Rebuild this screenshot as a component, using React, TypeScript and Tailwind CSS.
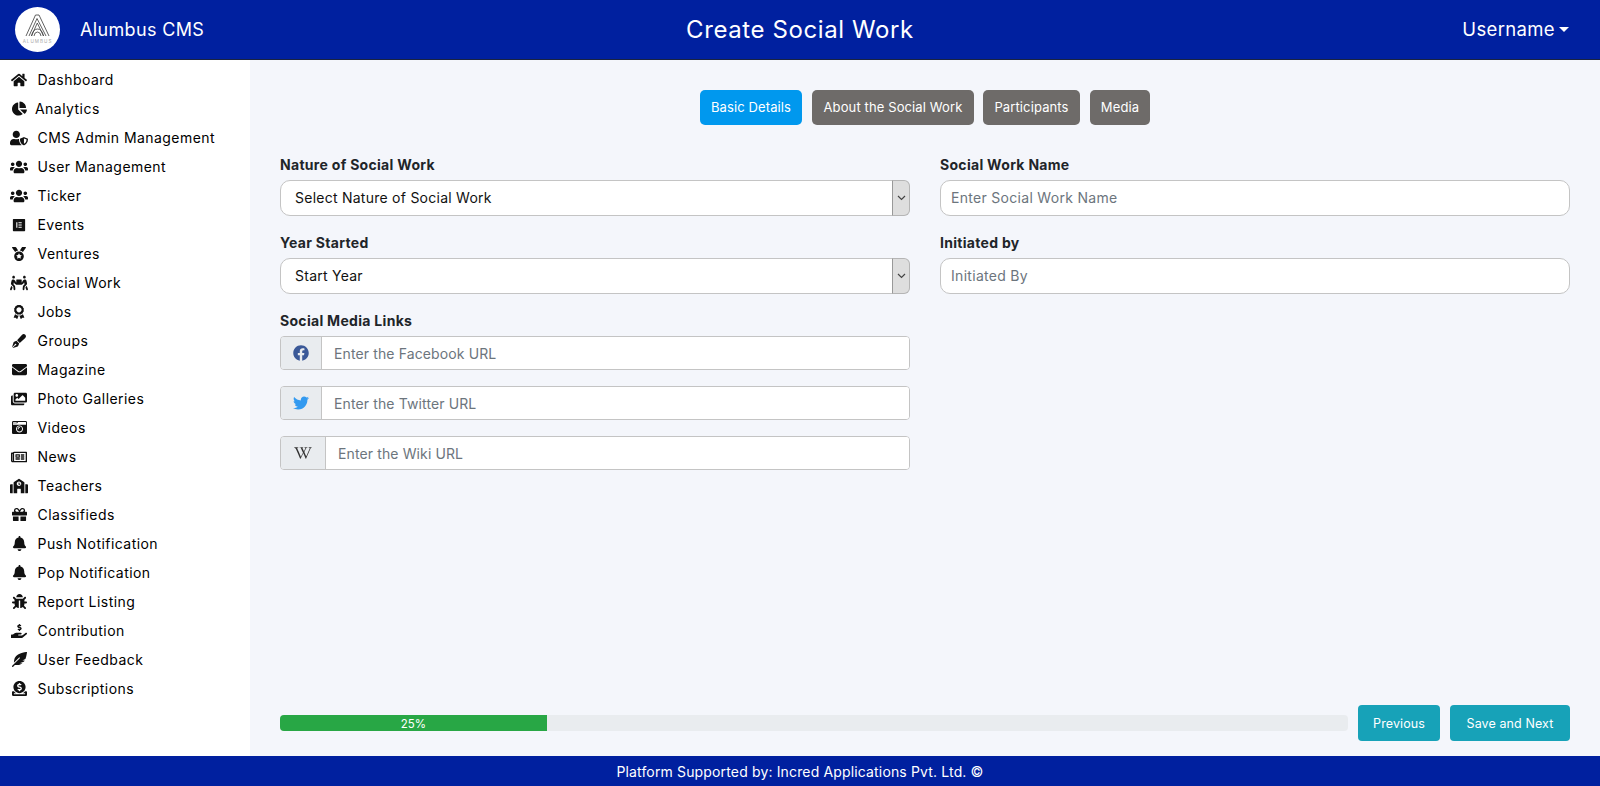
import React from "react";
import {
  FaHome, FaChartPie, FaUserShield, FaUsers, FaElementor, FaMedal, FaPeopleCarry, FaAward, FaPenFancy,
  FaEnvelope, FaImages, FaCameraRetro, FaRegNewspaper, FaSchool, FaGift, FaBell, FaBug, FaHandHoldingUsd,
  FaFeatherAlt, FaDonate, FaFacebook, FaTwitter, FaWikipediaW,
} from "react-icons/fa";

const menu: [any, string, string, boolean?][] = [
  [FaHome, "Dashboard", "text-[16px]"],
  [FaChartPie, "Analytics", "text-[15px]", true],
  [FaUserShield, "CMS Admin Management", "text-[18px]"],
  [FaUsers, "User Management", "text-[18px]"],
  [FaUsers, "Ticker", "text-[18px]"],
  [FaElementor, "Events", "text-[14px]"],
  [FaMedal, "Ventures", "text-[14px]"],
  [FaPeopleCarry, "Social Work", "text-[18px]"],
  [FaAward, "Jobs", "text-[14px]"],
  [FaPenFancy, "Groups", "text-[14px]"],
  [FaEnvelope, "Magazine", "text-[15px]"],
  [FaImages, "Photo Galleries", "text-[16px]"],
  [FaCameraRetro, "Videos", "text-[15px]"],
  [FaRegNewspaper, "News", "text-[16px]"],
  [FaSchool, "Teachers", "text-[18px]"],
  [FaGift, "Classifieds", "text-[15px]"],
  [FaBell, "Push Notification", "text-[15px]"],
  [FaBell, "Pop Notification", "text-[15px]"],
  [FaBug, "Report Listing", "text-[15px]"],
  [FaHandHoldingUsd, "Contribution", "text-[16px]"],
  [FaFeatherAlt, "User Feedback", "text-[15px]"],
  [FaDonate, "Subscriptions", "text-[15px]"],
];

function Logo() {
  return (
    <div className="w-[45px] h-[45px] rounded-full bg-white flex items-center justify-center shrink-0">
      <svg viewBox="0 0 45 45" className="w-[45px] h-[45px]">
        <g fill="none" stroke="#3a3a3a" strokeWidth="0.8">
          <path d="M11 29 L20.5 8 L24 8 L34 29" />
          <path d="M14 29 L22 11.5 L31 29" />
          <path d="M16.5 29 L22.3 16 L28.5 29" />
          <path d="M16.5 29 Q18 22 22.5 22 Q27 22 28.5 29" />
          <path d="M19 29 Q19.5 25 22.5 25 Q25.5 25 26 29" />
        </g>
        <text x="22.5" y="35.5" textAnchor="middle" fontSize="4.6" letterSpacing="1" fill="#aaa" fontFamily="Inter, sans-serif">ALUMBUS</text>
      </svg>
    </div>
  );
}

function Label({ children }: { children: React.ReactNode }) {
  return <label className="block text-[14px] leading-[21px] font-bold text-[#212529] tracking-[0.3px] mb-[5px]">{children}</label>;
}

function SelectBox({ text }: { text: string }) {
  return (
    <div className="relative h-[36px] mb-[16px]">
      <select className="appearance-none w-full h-full pl-[14px] pr-8 pb-[2px] bg-white border border-[#c4c4c4] rounded-[10px] text-[14px] text-[#111] tracking-[0.25px] outline-none">
        <option>{text}</option>
      </select>
      <div className="absolute right-0 top-0 bottom-0 w-[18px] bg-[#dedede] border border-[#b5b5b5] border-l-[#999] rounded-r-[6px] flex items-center justify-center pointer-events-none">
        <svg width="9" height="6" viewBox="0 0 9 6" fill="none" stroke="#444" strokeWidth="1.2"><path d="M1 1l3.5 3.5L8 1" /></svg>
      </div>
    </div>
  );
}

function TextBox({ placeholder }: { placeholder: string }) {
  return (
    <input
      placeholder={placeholder}
      className="block w-full h-[36px] mb-[16px] px-[10px] pb-[2px] bg-white border border-[#c4c4c4] rounded-[10px] text-[14px] tracking-[0.3px] placeholder:text-[#6c757d] outline-none"
    />
  );
}

function LinkInput({ icon, placeholder, wide }: { icon: React.ReactNode; placeholder: string; wide?: boolean }) {
  return (
    <div className="flex h-[34px] mb-[16px] bg-white border border-[#c4c4c4] rounded-[4px] overflow-hidden">
      <div className={`${wide ? "w-[45px]" : "w-[41px]"} shrink-0 bg-[#e9ecef] border-r border-[#c4c4c4] flex items-center justify-center`}>{icon}</div>
      <input placeholder={placeholder} className="flex-1 min-w-0 px-3 bg-white text-[14px] tracking-[0.12px] placeholder:text-[#6c757d] outline-none" />
    </div>
  );
}

const tab = "h-[35px] rounded-[5px] text-white text-[13px] tracking-[0.12px] pt-px";

export default function App() {
  return (
    <div className="h-[786px] w-[1600px] flex flex-col overflow-hidden bg-[#f4f6fb] font-['Inter',sans-serif]">
      <header className="h-[60px] shrink-0 bg-[#00209f] border-b border-[#1a2340] flex items-center text-white relative">
        <div className="flex items-center pl-[15px] w-[400px]">
          <Logo />
          <span className="ml-[20px] text-[18px] tracking-[0.35px]">Alumbus CMS</span>
        </div>
        <h1 className="flex-1 text-center text-[24px] font-normal tracking-[0.6px]">Create Social Work</h1>
        <div className="w-[400px] flex items-center justify-end pr-[31px] text-[18.5px] tracking-[0.35px]">
          Username
          <span className="ml-[4px] w-0 h-0 border-x-[5px] border-x-transparent border-t-[5px] border-t-white" />
        </div>
      </header>

      <div className="flex-1 flex min-h-0">
        <aside className="w-[250px] shrink-0 bg-white pt-[5px]">
          {menu.map(([Icon, name, size, tight], i) => (
            <div key={i} className="h-[29px] flex items-center text-[14px] tracking-[0.45px] text-black">
              <span className="w-[18px] ml-[10px] flex justify-center"><Icon className={`${size} text-[#111]`} /></span>
              <span className={tight ? "ml-[7px]" : "ml-[9.5px]"}>{name}</span>
            </div>
          ))}
        </aside>

        <main className="flex-1 min-w-0 px-[30px] flex flex-col">
          <nav className="flex justify-center pt-[30px] mb-[29px]">
            <button className={`${tab} w-[102px] bg-[#0098ee]`}>Basic Details</button>
            <button className={`${tab} ml-[10px] w-[162px] bg-[#6e6b69]`}>About the Social Work</button>
            <button className={`${tab} ml-[9px] w-[97px] bg-[#6e6b69]`}>Participants</button>
            <button className={`${tab} ml-[10px] w-[60px] bg-[#6e6b69]`}>Media</button>
          </nav>

          <div className="grid grid-cols-2 gap-x-[30px]">
            <div>
              <Label>Nature of Social Work</Label>
              <SelectBox text="Select Nature of Social Work" />
              <Label>Year Started</Label>
              <SelectBox text="Start Year" />
              <Label>Social Media Links</Label>
              <LinkInput icon={<FaFacebook className="text-[16px] text-[#3b5998]" />} placeholder="Enter the Facebook URL" />
              <LinkInput icon={<FaTwitter className="text-[16px] text-[#339af0]" />} placeholder="Enter the Twitter URL" />
              <LinkInput wide icon={<FaWikipediaW className="text-[18px] text-[#333]" />} placeholder="Enter the Wiki URL" />
            </div>
            <div>
              <Label>Social Work Name</Label>
              <TextBox placeholder="Enter Social Work Name" />
              <Label>Initiated by</Label>
              <TextBox placeholder="Initiated By" />
            </div>
          </div>

          <div className="mt-auto pb-[15px] flex items-center">
            <div className="flex-1 h-[16px] rounded-[4px] bg-[#e9ecef] overflow-hidden">
              <div className="w-1/4 h-full bg-[#28a745] text-white text-[11.5px] leading-[18px] text-center">25%</div>
            </div>
            <button className="ml-[10px] h-[36px] w-[82px] rounded-[4px] bg-[#17a2b8] text-white text-[12.5px] tracking-[0.1px] pt-[2px]">Previous</button>
            <button className="ml-[10px] h-[36px] w-[120px] rounded-[4px] bg-[#17a2b8] text-white text-[12.5px] tracking-[0.1px] pt-[2px]">Save and Next</button>
          </div>
        </main>
      </div>

      <footer className="h-[30px] shrink-0 bg-[#00209f] text-white text-[14px] tracking-[0.15px] flex items-center justify-center">
        Platform Supported by: Incred Applications Pvt. Ltd. ©
      </footer>
    </div>
  );
}
